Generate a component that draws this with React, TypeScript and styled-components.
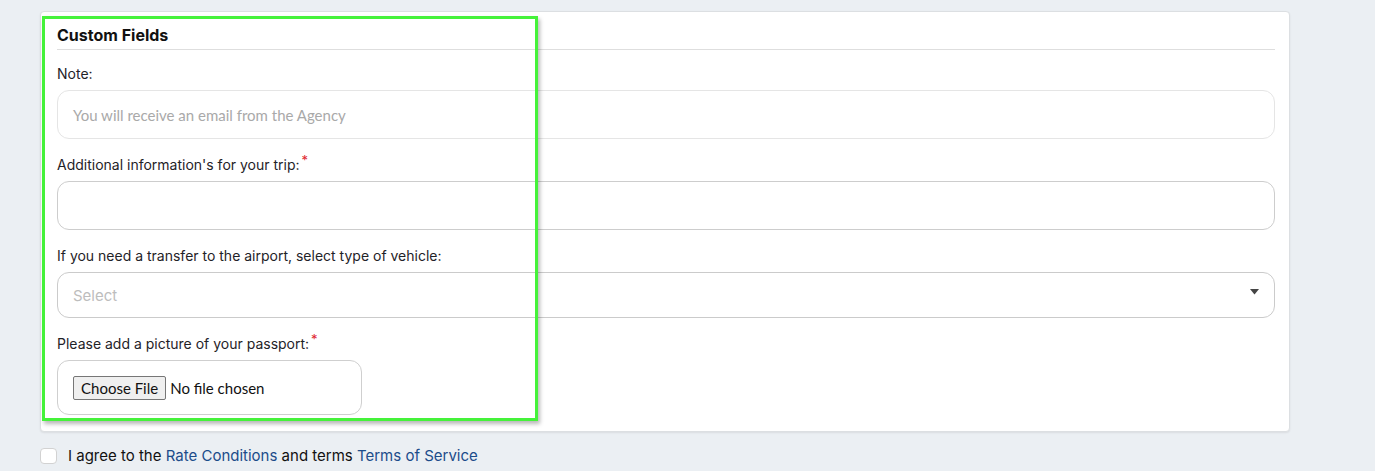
import React from "react";
import styled, { createGlobalStyle } from "styled-components";

const GlobalStyle = createGlobalStyle`
  html, body {
    margin: 0;
    padding: 0;
    background: #ebeff3;
  }
  body {
    font-family: Inter, "Noto Sans", sans-serif;
    color: #212529;
  }
  * { box-sizing: border-box; }
`;

const Page = styled.div`
  width: 1375px;
  height: 471px;
  padding: 11px 0 0 40px;
  overflow: hidden;
`;

const Card = styled.section`
  position: relative;
  width: 1250px;
  background: #fff;
  border: 1px solid #dcdfe2;
  border-radius: 4px;
  box-shadow: 0 1px 2px rgba(0, 0, 0, 0.08);
  padding: 13px 14px 16px 16px;
`;

const Highlight = styled.div`
  position: absolute;
  left: 1px;
  top: 4px;
  width: 496px;
  height: 405px;
  border: 3px solid #45f23a;
  box-shadow: 2px 3px 4px rgba(0, 0, 0, 0.28);
  pointer-events: none;
`;

const Heading = styled.h3`
  margin: 0;
  font-family: Inter, sans-serif;
  font-size: 16px;
  line-height: 20px;
  font-weight: 700;
  color: #111;
  padding-bottom: 4px;
  border-bottom: 1px solid #dedede;
`;

const Fields = styled.div`
  display: flex;
  flex-direction: column;
  gap: 16px;
  margin-top: 14px;
`;

const Field = styled.div`
  display: flex;
  flex-direction: column;
  align-items: flex-start;
  gap: 6px;
`;

const Label = styled.label`
  display: block;
  font-family: Inter, sans-serif;
  font-size: 14px;
  line-height: 20px;
  height: 20px;
  color: #1f2328;
`;

const Req = styled.span`
  color: #e0262f;
  font-size: 13px;
  position: relative;
  top: -5px;
  margin-left: 2px;
`;

const TextBox = styled.div<{ $soft?: boolean }>`
  width: 100%;
  height: 49px;
  border: 1px solid ${(p) => (p.$soft ? "#e5e5e5" : "#cdcdcd")};
  border-radius: 12px;
  display: flex;
  align-items: center;
  padding: 0 15px;
  font-family: Lato, sans-serif;
  font-size: 15px;
  color: #a9a9a9;
`;

const SelectBox = styled.div`
  width: 100%;
  height: 46px;
  border: 1px solid #cbcbcb;
  border-radius: 12px;
  display: flex;
  align-items: center;
  justify-content: space-between;
  padding: 0 15px 0 15px;
  font-family: Inter, sans-serif;
  font-size: 15px;
  color: #bdbdbd;
`;

const Caret = styled.svg`
  width: 9px;
  height: 6px;
  margin-top: -6px;
`;

const FileBox = styled.div`
  width: 305px;
  height: 55px;
  border: 1px solid #cfcfcf;
  border-radius: 12px;
  display: flex;
  align-items: center;
  padding: 0 15px;
`;

const FileInput = styled.input`
  font-family: Lato, sans-serif;
  font-size: 15px;
  color: #111;
  &::file-selector-button {
    font-family: Lato, sans-serif;
    font-size: 15px;
    height: 24px;
    padding: 0 7px;
    margin-right: 4px;
    border: 1px solid #767676;
    border-radius: 2px;
    background: #efefef;
    color: #111;
  }
`;

const AgreeRow = styled.div`
  display: flex;
  align-items: center;
  gap: 11px;
  margin-top: 14px;
  font-family: Inter, sans-serif;
  font-size: 15px;
  line-height: 20px;
  color: #111;
`;

const Check = styled.span`
  width: 17px;
  height: 16px;
  background: #fff;
  border: 1px solid #d2d2d2;
  border-radius: 4px;
`;

const Link = styled.a`
  color: #1c4c8a;
  text-decoration: none;
`;

export default function App() {
  return (
    <>
      <GlobalStyle />
      <Page>
        <Card>
          <Heading>Custom Fields</Heading>
          <Fields>
            <Field>
              <Label>Note:</Label>
              <TextBox $soft>You will receive an email from the Agency</TextBox>
            </Field>
            <Field>
              <Label>
                Additional information's for your trip:<Req>*</Req>
              </Label>
              <TextBox />
            </Field>
            <Field>
              <Label>If you need a transfer to the airport, select type of vehicle:</Label>
              <SelectBox>
                <span>Select</span>
                <Caret viewBox="0 0 9 6">
                  <path d="M0 0 H9 L4.5 5.5 Z" fill="#444" />
                </Caret>
              </SelectBox>
            </Field>
            <Field>
              <Label>
                Please add a picture of your passport:<Req>*</Req>
              </Label>
              <FileBox>
                <FileInput type="file" />
              </FileBox>
            </Field>
          </Fields>
          <Highlight />
        </Card>
        <AgreeRow>
          <Check />
          <span>
            I agree to the <Link href="#">Rate Conditions</Link> and terms{" "}
            <Link href="#">Terms of Service</Link>
          </span>
        </AgreeRow>
      </Page>
    </>
  );
}
